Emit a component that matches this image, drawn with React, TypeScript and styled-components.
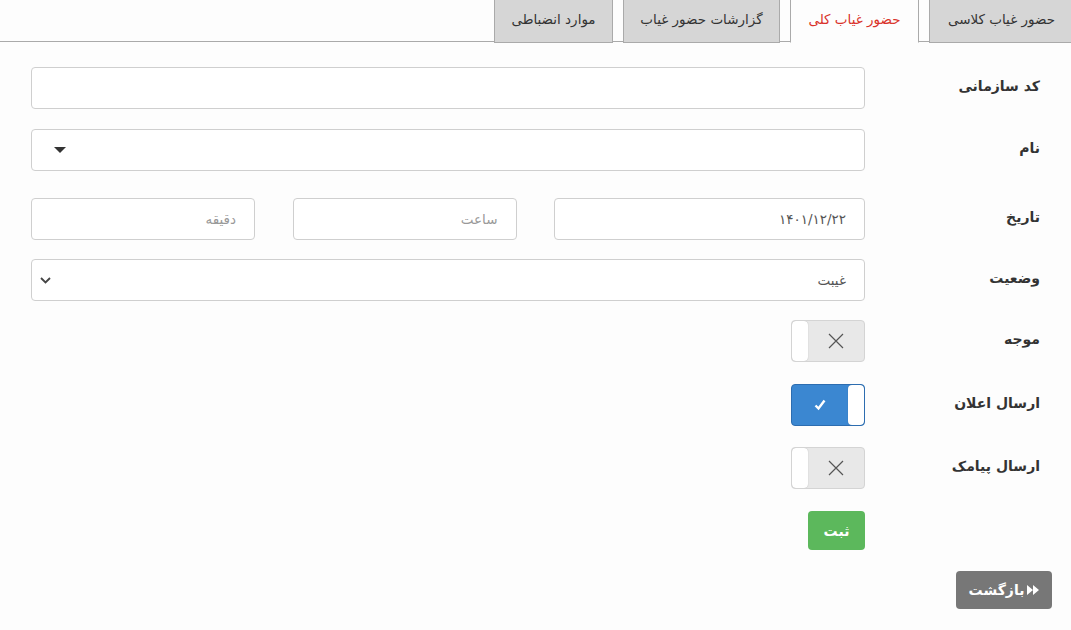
import React from 'react'
import styled, { createGlobalStyle } from 'styled-components'

const GlobalStyle = createGlobalStyle`
  html, body {
    margin: 0;
    padding: 0;
    background: #fdfdfd;
    font-family: "DejaVu Sans", "Noto Sans", sans-serif;
    color: #333;
  }
  * { box-sizing: border-box; }
`

const Page = styled.div`
  direction: rtl;
  width: 1071px;
  min-height: 630px;
  overflow: hidden;
`

const TabBar = styled.div`
  display: flex;
  height: 44px;
  border-bottom: 1px solid #aaa;
  margin-top: -2px;
  margin-right: -3px;
`

const Tab = styled.div<{ $active?: boolean; $width: number }>`
  height: 45px;
  padding: 12px 0 0;
  margin-left: 10px;
  width: ${(p) => p.$width}px;
  text-align: center;
  font-size: 13.5px;
  border: 1px solid #aaa;
  border-bottom: ${(p) => (p.$active ? '1px solid #fdfdfd' : '1px solid #aaa')};
  background: ${(p) => (p.$active ? '#fdfdfd' : '#d6d6d6')};
  color: ${(p) => (p.$active ? '#d9332b' : '#333')};
`

const Form = styled.div`
  padding: 25px 31px 0;
  display: flex;
  flex-direction: column;
`

const Row = styled.div<{ $gap: number }>`
  display: grid;
  grid-template-columns: 175px 1fr;
  align-items: center;
  margin-bottom: ${(p) => p.$gap}px;
`

const Label = styled.div`
  font-size: 14px;
  font-weight: bold;
  color: #333;
  text-align: right;
  padding-bottom: 4px;
`

const Input = styled.div<{ $muted?: boolean }>`
  height: 42px;
  border: 1px solid #cfcfcf;
  border-radius: 4px;
  background: #fff;
  display: flex;
  align-items: center;
  padding: 0 18px;
  font-size: 13.5px;
  color: ${(p) => (p.$muted ? '#999' : '#555')};
`

const SelectBox = styled(Input)`
  justify-content: space-between;
  padding: 0 18px 0 8px;
`

const DateRow = styled.div`
  display: grid;
  grid-template-columns: 311px 224px 224px;
  justify-content: space-between;
`

const Toggle = styled.div<{ $on?: boolean }>`
  width: 74px;
  height: 42px;
  border-radius: 4px;
  border: 1px solid ${(p) => (p.$on ? '#2d6db0' : '#d4d4d4')};
  background: ${(p) => (p.$on ? '#3b87d1' : '#e8e8e8')};
  display: flex;
  flex-direction: ${(p) => (p.$on ? 'row' : 'row-reverse')};
  overflow: hidden;
`

const Knob = styled.div`
  width: 16px;
  background: #fff;
  border-radius: 4px;
  box-shadow: 0 0 1px rgba(0, 0, 0, 0.3);
`

const ToggleIcon = styled.div`
  flex: 1;
  display: flex;
  align-items: center;
  justify-content: center;
`

const Controls = styled.div`
  display: flex;
`

const SubmitButton = styled.button`
  width: 57px;
  height: 39px;
  border: none;
  border-radius: 4px;
  background: #5cb85c;
  color: #fff;
  font-family: inherit;
  font-size: 14px;
  font-weight: bold;
`

const Footer = styled.div`
  display: flex;
  padding: 21px 19px 0;
`

const BackButton = styled.button`
  width: 96px;
  height: 38px;
  border: none;
  border-radius: 4px;
  background: #777;
  color: #fff;
  font-family: inherit;
  font-size: 14px;
  font-weight: bold;
  display: flex;
  align-items: center;
  justify-content: center;
  gap: 3px;
`

const Cross = () => (
  <svg width="18" height="18" viewBox="0 0 18 18">
    <path d="M2 2L16 16M16 2L2 16" stroke="#555" strokeWidth="1.2" />
  </svg>
)

const Check = () => (
  <svg width="14" height="14" viewBox="0 0 14 14">
    <path d="M2.5 7.5L5.5 10.5L11.5 2.5" stroke="#fff" strokeWidth="2.4" fill="none" />
  </svg>
)

const App = () => {
  return (
    <Page>
      <GlobalStyle />
      <TabBar>
        <Tab $width={145}>حضور غیاب کلاسی</Tab>
        <Tab $width={129} $active>
          حضور غیاب کلی
        </Tab>
        <Tab $width={157}>گزارشات حضور غیاب</Tab>
        <Tab $width={119}>موارد انضباطی</Tab>
      </TabBar>
      <Form>
        <Row $gap={20}>
          <Label>کد سازمانی</Label>
          <Input />
        </Row>
        <Row $gap={27}>
          <Label>نام</Label>
          <SelectBox>
            <span />
            <svg width="12" height="7" viewBox="0 0 12 7" style={{ marginLeft: 14 }}>
              <path d="M0 0H12L6 6Z" fill="#333" />
            </svg>
          </SelectBox>
        </Row>
        <Row $gap={19}>
          <Label>تاریخ</Label>
          <DateRow>
            <Input>۱۴۰۱/۱۲/۲۲</Input>
            <Input $muted>ساعت</Input>
            <Input $muted>دقیقه</Input>
          </DateRow>
        </Row>
        <Row $gap={19}>
          <Label>وضعیت</Label>
          <SelectBox>
            <span>غیبت</span>
            <svg width="11" height="7" viewBox="0 0 11 7">
              <path d="M1 1L5.5 5.5L10 1" stroke="#444" strokeWidth="1.8" fill="none" />
            </svg>
          </SelectBox>
        </Row>
        <Row $gap={22}>
          <Label>موجه</Label>
          <Controls>
            <Toggle>
              <Knob />
              <ToggleIcon>
                <Cross />
              </ToggleIcon>
            </Toggle>
          </Controls>
        </Row>
        <Row $gap={21}>
          <Label>ارسال اعلان</Label>
          <Controls>
            <Toggle $on>
              <Knob />
              <ToggleIcon>
                <Check />
              </ToggleIcon>
            </Toggle>
          </Controls>
        </Row>
        <Row $gap={22}>
          <Label>ارسال پیامک</Label>
          <Controls>
            <Toggle>
              <Knob />
              <ToggleIcon>
                <Cross />
              </ToggleIcon>
            </Toggle>
          </Controls>
        </Row>
        <Row $gap={0}>
          <span />
          <Controls>
            <SubmitButton>ثبت</SubmitButton>
          </Controls>
        </Row>
      </Form>
      <Footer>
        <BackButton>
          <svg width="12" height="10" viewBox="0 0 12 10">
            <path d="M0 0L6 5L0 10Z M6 0L12 5L6 10Z" fill="#fff" />
          </svg>
          بازگشت
        </BackButton>
      </Footer>
    </Page>
  )
}

export default App
